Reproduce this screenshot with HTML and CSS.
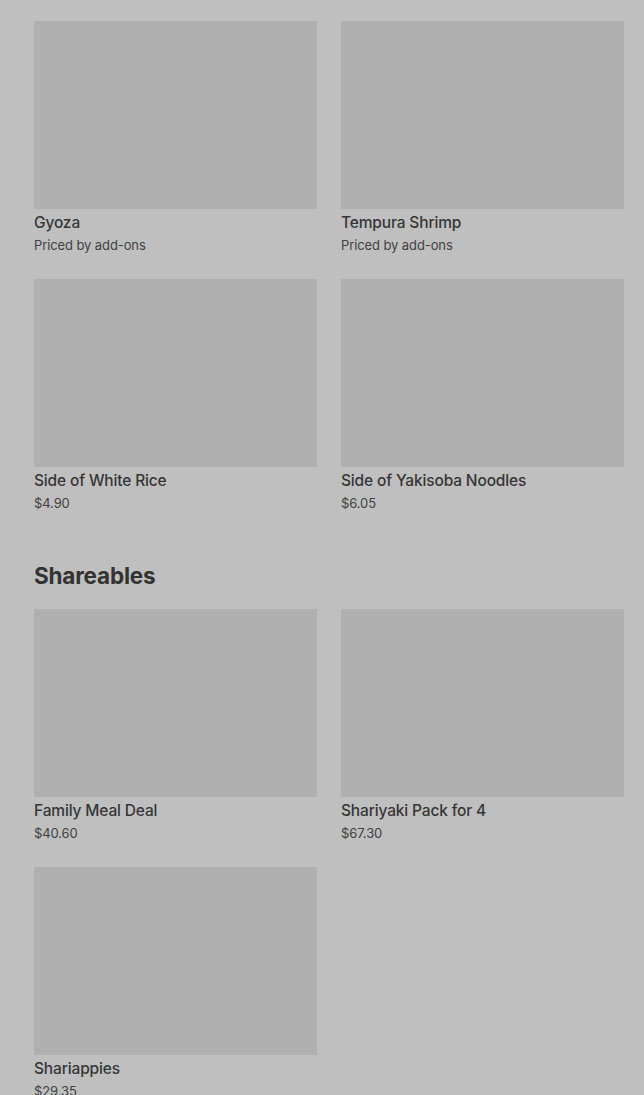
FILE: index.html
```html
<!DOCTYPE html>
<html lang="en">
<head>
<meta charset="utf-8">
<title>Menu</title>
<link rel="stylesheet" href="styles.css">
</head>
<body>
<main class="menu">
  <section class="section">
    <div class="grid">
      <div class="card"><div class="thumb"></div><div class="name">Gyoza</div><div class="price">Priced by add-ons</div></div>
      <div class="card"><div class="thumb"></div><div class="name">Tempura Shrimp</div><div class="price">Priced by add-ons</div></div>
      <div class="card"><div class="thumb"></div><div class="name">Side of White Rice</div><div class="price">$4.90</div></div>
      <div class="card"><div class="thumb"></div><div class="name">Side of Yakisoba Noodles</div><div class="price">$6.05</div></div>
    </div>
  </section>
  <section class="section">
    <h2 class="heading">Shareables</h2>
    <div class="grid">
      <div class="card"><div class="thumb"></div><div class="name">Family Meal Deal</div><div class="price">$40.60</div></div>
      <div class="card"><div class="thumb"></div><div class="name">Shariyaki Pack for 4</div><div class="price">$67.30</div></div>
      <div class="card"><div class="thumb"></div><div class="name">Shariappies</div><div class="price">$29.35</div></div>
    </div>
  </section>
</main>
</body>
</html>
```
FILE: styles.css
```css
html, body {
  margin: 0;
  padding: 0;
  background: #bfbfbf;
}
body {
  font-family: Inter, "Liberation Sans", sans-serif;
  color: #353535;
  overflow: hidden;
  height: 1095px;
}
.menu {
  padding: 21px 20px 0 34px;
}
.section + .section {
  margin-top: 47px;
}
.heading {
  margin: 0 0 17px 0;
  font-size: 22.5px;
  line-height: 32px;
  font-weight: 700;
  letter-spacing: -0.2px;
  color: #333;
}
.grid {
  display: grid;
  grid-template-columns: 283px 283px;
  column-gap: 24px;
  row-gap: 24px;
}
.thumb {
  height: 188px;
  background: #b0b0b0;
}
.name {
  margin-top: 2px;
  font-size: 15.5px;
  line-height: 24px;
  font-weight: 500;
  letter-spacing: -0.15px;
  color: #363636;
}
.price {
  font-size: 13px;
  line-height: 20px;
  letter-spacing: -0.1px;
  color: #424242;
}
```
